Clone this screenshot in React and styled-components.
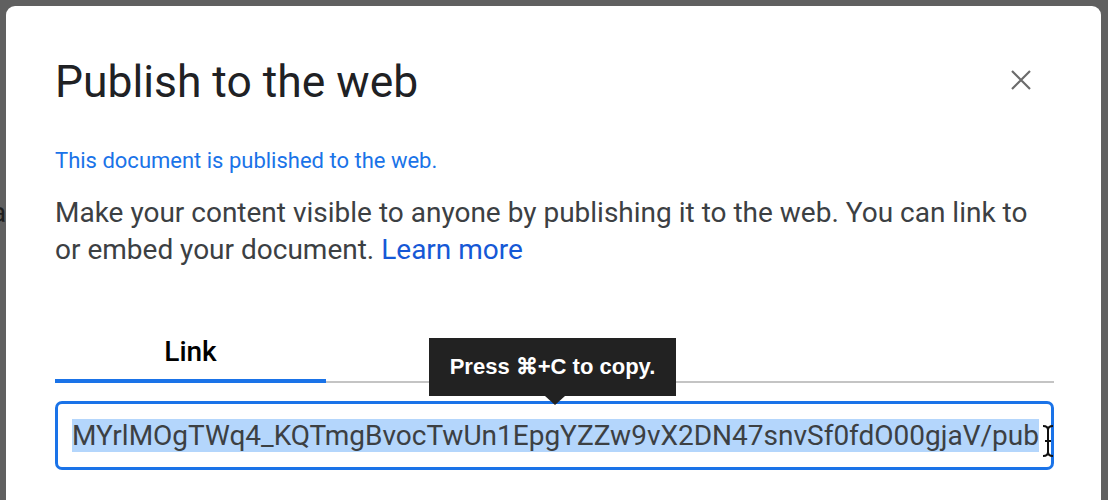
import React from "react";
import styled, { createGlobalStyle } from "styled-components";

const GlobalStyle = createGlobalStyle`
  html, body {
    margin: 0;
    padding: 0;
    background: #606060;
    overflow: hidden;
  }
  body {
    font-family: Roboto, "Noto Sans", Arial, sans-serif;
    -webkit-font-smoothing: antialiased;
  }
`;

const Backdrop = styled.div`
  position: relative;
  width: 1108px;
  height: 500px;
  padding: 6px 7px 0 6px;
  box-sizing: border-box;
  overflow: hidden;
`;

// bit of the page behind the dialog peeking out on the left
const BehindText = styled.span`
  position: absolute;
  left: -9px;
  top: 196px;
  font-size: 28px;
  color: #1f1f1f;
`;

const Dialog = styled.div`
  position: relative;
  background: #fff;
  border-radius: 9px;
  height: 560px;
  padding: 50px 47px 0 49px;
  box-sizing: border-box;
`;

const Header = styled.div`
  display: flex;
  align-items: center;
  justify-content: space-between;
  height: 52px;
`;

const Title = styled.h1`
  margin: 0;
  font-size: 44.4px;
  line-height: 52px;
  font-weight: 400;
  color: #202124;
`;

const CloseButton = styled.button`
  width: 48px;
  height: 48px;
  margin: -4px 9px 0 0;
  border: 0;
  background: none;
  display: flex;
  align-items: center;
  justify-content: center;
  padding: 0;
  cursor: pointer;
`;

const Notice = styled.p`
  margin: 39px 0 0;
  font-size: 22px;
  line-height: 28px;
  color: #1a73e8;
`;

const Body = styled.p`
  margin: 19px 0 0;
  font-size: 28px;
  line-height: 37px;
  color: #3c4043;
`;

const LearnMore = styled.a`
  color: #1558d6;
  text-decoration: none;
`;

const LinkArea = styled.div`
  position: relative;
  margin-top: 68px;
`;

const TabBar = styled.div`
  display: flex;
  border-bottom: 2px solid #c4c4c4;
`;

const Tab = styled.div`
  width: 271px;
  text-align: center;
  font-size: 28px;
  line-height: 32px;
  font-weight: 500;
  color: #000;
  padding-bottom: 11px;
  margin-bottom: -2px;
  border-bottom: 4px solid ${(p) => (p.$active ? "#1a73e8" : "transparent")};
`;

const UrlField = styled.div`
  position: relative;
  margin-top: 18px;
  height: 69px;
  border: 3px solid #1a73e8;
  border-radius: 7px;
  box-sizing: border-box;
  padding: 0 14px;
  display: flex;
  align-items: center;
  font-size: 28px;
  color: #3c4043;
  white-space: nowrap;
  overflow: visible;
`;

const Selected = styled.span`
  background: #b4d6fc;
`;

const Cursor = styled.svg`
  position: absolute;
  right: -4px;
  top: 20px;
`;

const Tooltip = styled.div`
  position: absolute;
  left: 374px;
  top: 2px;
  width: 247px;
  height: 58px;
  background: #222;
  color: #fff;
  display: flex;
  align-items: center;
  justify-content: center;
  font-family: "Liberation Sans", Arial, sans-serif;
  font-weight: 700;
  font-size: 22px;

  &::after {
    content: "";
    position: absolute;
    left: 116px;
    bottom: -9px;
    border-left: 10px solid transparent;
    border-right: 10px solid transparent;
    border-top: 9px solid #222;
  }
`;

const App = () => {
  return (
    <>
      <GlobalStyle />
      <Backdrop>
        <BehindText>a</BehindText>
        <Dialog>
          <Header>
            <Title>Publish to the web</Title>
            <CloseButton aria-label="Close">
              <svg width="22" height="22" viewBox="0 0 22 22">
                <path
                  d="M2 2 L20 20 M20 2 L2 20"
                  stroke="#6b6b6b"
                  strokeWidth="2.2"
                  fill="none"
                />
              </svg>
            </CloseButton>
          </Header>
          <Notice>This document is published to the web.</Notice>
          <Body>
            Make your content visible to anyone by publishing it to the web. You can link to
            or embed your document. <LearnMore href="#">Learn more</LearnMore>
          </Body>
          <LinkArea>
            <TabBar>
              <Tab $active>Link</Tab>
            </TabBar>
            <UrlField>
              <Selected>MYrlMOgTWq4_KQTmgBvocTwUn1EpgYZZw9vX2DN47snvSf0fdO00gjaV/pub</Selected>
              <Cursor width="14" height="34" viewBox="0 0 14 34">
                <path
                  d="M2 2 Q7 2 7 6 L7 28 Q7 32 12 32 M12 2 Q7 2 7 6 M7 28 Q7 32 2 32 M4 17 L10 17"
                  stroke="#111"
                  strokeWidth="2"
                  fill="none"
                />
              </Cursor>
            </UrlField>
            <Tooltip>Press ⌘+C to copy.</Tooltip>
          </LinkArea>
        </Dialog>
      </Backdrop>
    </>
  );
};

export default App;
